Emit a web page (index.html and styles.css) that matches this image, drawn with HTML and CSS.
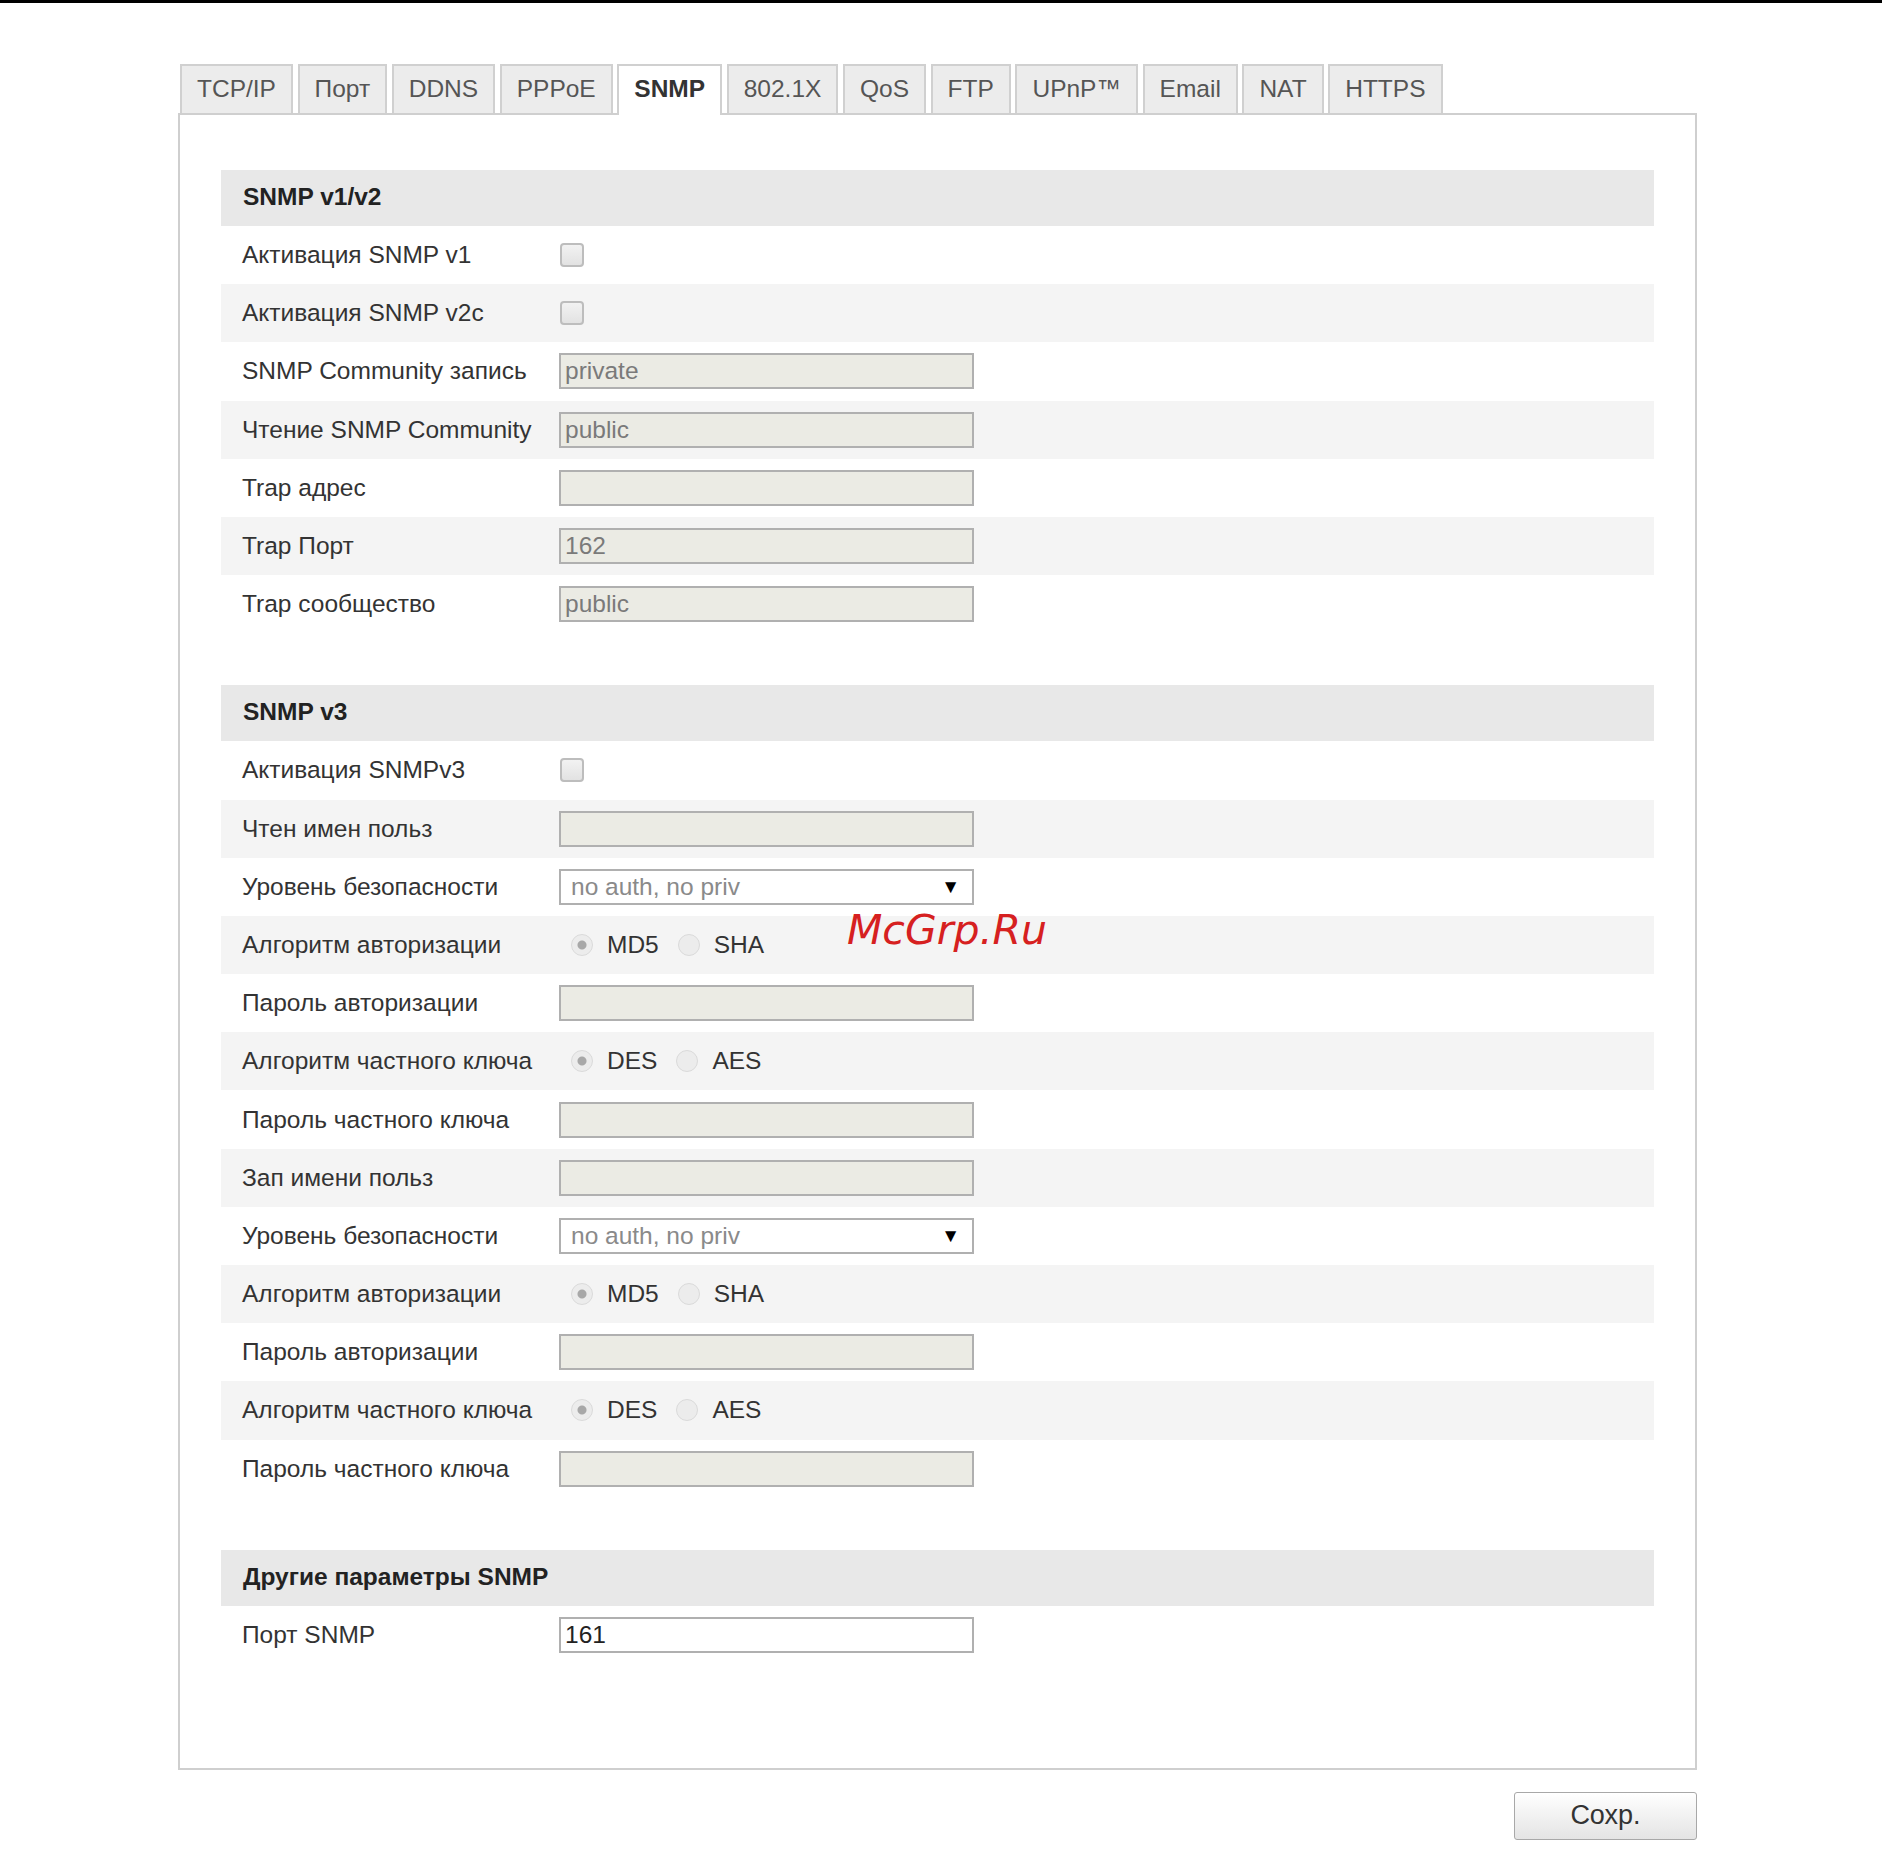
FILE: index.html
```html
<!DOCTYPE html>
<html lang="ru">
<head>
    <meta charset="UTF-8">
    <title>Сеть - SNMP</title>
    <link rel="stylesheet" href="styles.css">
</head>
<body>
    <div class="top-bar"></div>

    <div class="page">
        <!-- Tabs -->
        <div class="tabs">
            <div class="tab">TCP/IP</div>
            <div class="tab">Порт</div>
            <div class="tab">DDNS</div>
            <div class="tab">PPPoE</div>
            <div class="tab active">SNMP</div>
            <div class="tab">802.1X</div>
            <div class="tab">QoS</div>
            <div class="tab">FTP</div>
            <div class="tab">UPnP™</div>
            <div class="tab">Email</div>
            <div class="tab">NAT</div>
            <div class="tab">HTTPS</div>
        </div>

        <div class="panel">
            <!-- SNMP v1/v2 -->
            <div class="section">
                <div class="section-title">SNMP v1/v2</div>
                <div class="rows">
                    <div class="row">
                        <label>Активация SNMP v1</label>
                        <input type="checkbox" class="check" disabled>
                    </div>
                    <div class="row">
                        <label>Активация SNMP v2c</label>
                        <input type="checkbox" class="check" disabled>
                    </div>
                    <div class="row">
                        <label>SNMP Community запись</label>
                        <input type="text" class="field" value="private" disabled>
                    </div>
                    <div class="row">
                        <label>Чтение SNMP Community</label>
                        <input type="text" class="field" value="public" disabled>
                    </div>
                    <div class="row">
                        <label>Trap адрес</label>
                        <input type="text" class="field" value="" disabled>
                    </div>
                    <div class="row">
                        <label>Trap Порт</label>
                        <input type="text" class="field" value="162" disabled>
                    </div>
                    <div class="row">
                        <label>Trap сообщество</label>
                        <input type="text" class="field" value="public" disabled>
                    </div>
                </div>
            </div>

            <!-- SNMP v3 -->
            <div class="section">
                <div class="section-title">SNMP v3</div>
                <div class="rows">
                    <div class="row">
                        <label>Активация SNMPv3</label>
                        <input type="checkbox" class="check" disabled>
                    </div>
                    <div class="row">
                        <label>Чтен имен польз</label>
                        <input type="text" class="field" disabled>
                    </div>
                    <div class="row">
                        <label>Уровень безопасности</label>
                        <div class="select">
                            <span>no auth, no priv</span>
                            <span class="arrow">▼</span>
                        </div>
                    </div>
                    <div class="row">
                        <label>Алгоритм авторизации</label>
                        <div class="radios">
                            <input type="radio" name="auth1" checked disabled><span>MD5</span>
                            <input type="radio" name="auth1" disabled><span>SHA</span>
                        </div>
                    </div>
                    <div class="row">
                        <label>Пароль авторизации</label>
                        <input type="text" class="field" disabled>
                    </div>
                    <div class="row">
                        <label>Алгоритм частного ключа</label>
                        <div class="radios">
                            <input type="radio" name="priv1" checked disabled><span>DES</span>
                            <input type="radio" name="priv1" disabled><span>AES</span>
                        </div>
                    </div>
                    <div class="row">
                        <label>Пароль частного ключа</label>
                        <input type="text" class="field" disabled>
                    </div>
                    <div class="row">
                        <label>Зап имени польз</label>
                        <input type="text" class="field" disabled>
                    </div>
                    <div class="row">
                        <label>Уровень безопасности</label>
                        <div class="select">
                            <span>no auth, no priv</span>
                            <span class="arrow">▼</span>
                        </div>
                    </div>
                    <div class="row">
                        <label>Алгоритм авторизации</label>
                        <div class="radios">
                            <input type="radio" name="auth2" checked disabled><span>MD5</span>
                            <input type="radio" name="auth2" disabled><span>SHA</span>
                        </div>
                    </div>
                    <div class="row">
                        <label>Пароль авторизации</label>
                        <input type="text" class="field" disabled>
                    </div>
                    <div class="row">
                        <label>Алгоритм частного ключа</label>
                        <div class="radios">
                            <input type="radio" name="priv2" checked disabled><span>DES</span>
                            <input type="radio" name="priv2" disabled><span>AES</span>
                        </div>
                    </div>
                    <div class="row">
                        <label>Пароль частного ключа</label>
                        <input type="text" class="field" disabled>
                    </div>
                </div>
            </div>

            <!-- Other -->
            <div class="section">
                <div class="section-title">Другие параметры SNMP</div>
                <div class="rows">
                    <div class="row">
                        <label>Порт SNMP</label>
                        <input type="text" class="field active-field" value="161">
                    </div>
                </div>
            </div>
        </div>

        <div class="actions">
            <button type="button" class="save-btn">Сохр.</button>
        </div>
    </div>

    <div class="watermark">McGrp.Ru</div>
</body>
</html>
```

FILE: styles.css
```css
/* Reset */
* { margin: 0; padding: 0; box-sizing: border-box; }
body {
    font-family: "Liberation Sans", Arial, sans-serif;
    font-size: 24.5px;
    color: #333;
    background-color: #fff;
    position: relative;
}
.top-bar {
    height: 3px;
    background-color: #000;
}
.page {
    width: 1519px;
    margin-left: 178px;
    padding-top: 61px;
}

/* Tabs */
.tabs {
    display: flex;
    align-items: flex-end;
    gap: 4.6px;
    padding-left: 2px;
}
.tab {
    height: 49px;
    line-height: 46px;
    padding: 0 15px;
    border: 2px solid #d0d0d0;
    border-bottom: none;
    background-color: #ececec;
    color: #555;
    white-space: nowrap;
}
.tab.active {
    height: 51px;
    margin-bottom: -2px;
    background-color: #fff;
    color: #333;
    font-weight: bold;
    position: relative;
    z-index: 1;
}

/* Panel */
.panel {
    border: 2px solid #cfcfcf;
    padding: 55px 41px 104px;
}
.section {
    margin-bottom: 52px;
}
.section:last-child {
    margin-bottom: 0;
}
.section-title {
    height: 56px;
    line-height: 54px;
    padding-left: 22px;
    background-color: #e8e8e8;
    font-weight: bold;
    color: #222;
}
.row {
    display: flex;
    align-items: center;
    height: 58.2px;
}
.row:nth-child(even) {
    background-color: #f4f4f4;
}
.row label {
    width: 338px;
    padding-left: 21px;
    white-space: nowrap;
}

/* Controls */
.field {
    width: 415px;
    height: 36px;
    padding: 0 4px;
    border: 2px solid #b0b0b0;
    background-color: #ebebe4;
    font-family: inherit;
    font-size: 24.5px;
    color: #7a7a7a;
    -webkit-text-fill-color: #7a7a7a;
}
.field.active-field {
    background-color: #fff;
    color: #222;
    -webkit-text-fill-color: #222;
}
.check {
    appearance: none;
    width: 24px;
    height: 24px;
    margin-left: 1px;
    border: 2px solid #bdbdbd;
    border-radius: 4px;
    background: linear-gradient(#f2f2f2, #e2e2e2);
}
.select {
    width: 415px;
    height: 36px;
    border: 2px solid #b0b0b0;
    background-color: #fff;
    display: flex;
    align-items: center;
    justify-content: space-between;
    padding: 0 12px 0 10px;
    color: #8a8a8a;
}
.select .arrow {
    color: #000;
    font-size: 19px;
}
.radios {
    display: flex;
    align-items: center;
    padding-left: 12px;
}
.radios input {
    appearance: none;
    width: 22px;
    height: 22px;
    border-radius: 50%;
    border: 1px solid #dadada;
    background: #ececec;
    margin-right: 14px;
}
.radios input:checked {
    background: radial-gradient(circle, #a8a8a8 0 4px, #ececec 5px);
}
.radios span {
    margin-right: 19px;
}

/* Save */
.actions {
    display: flex;
    justify-content: flex-end;
    margin-top: 22px;
}
.save-btn {
    width: 183px;
    height: 48px;
    border: 1px solid #a8a8a8;
    border-radius: 3px;
    background: linear-gradient(#ffffff, #e4e4e4);
    font-family: inherit;
    font-size: 27px;
    color: #333;
}

/* Watermark */
.watermark {
    position: absolute;
    left: 847px;
    top: 906px;
    font-family: "DejaVu Sans", sans-serif;
    font-style: italic;
    font-size: 41px;
    color: #d62020;
}
```
